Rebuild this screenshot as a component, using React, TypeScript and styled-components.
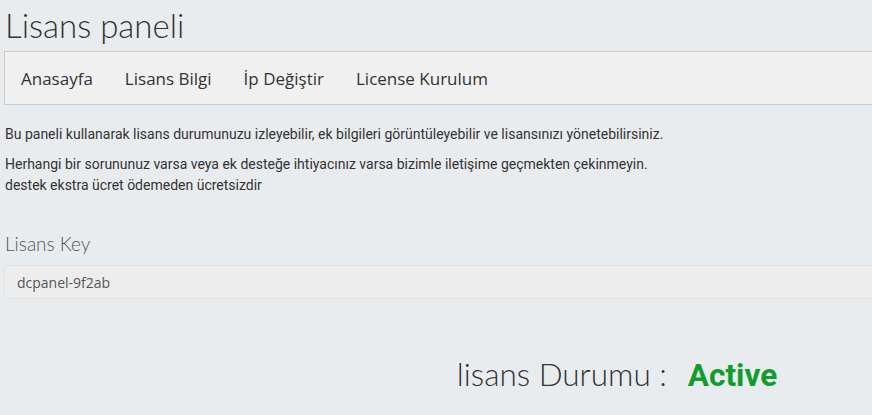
import React from 'react';
import styled, {createGlobalStyle} from 'styled-components';

const GlobalStyle = createGlobalStyle`
    html, body {
        margin: 0;
        padding: 0;
        background: #e9ecef;
        overflow: hidden;
    }
    body {
        font-family: Roboto, "Liberation Sans", sans-serif;
        color: #333;
    }
`

const Page = styled.div`
    width: 1226px;
    padding: 0 0 0 4px;
`

const Title = styled.h1`
    margin: 0;
    padding: 7px 0 0 1px;
    font-family: Lato, "Open Sans", sans-serif;
    font-weight: 300;
    font-size: 33px;
    line-height: 37px;
    color: #333;
`

const NavBar = styled.nav`
    margin-top: 7px;
    height: 52px;
    display: flex;
    align-items: center;
    padding-left: 16px;
    background: #f0f0f0;
    border: 1px solid #cccccc;
`

const NavLink = styled.a`
    font-family: "Open Sans", sans-serif;
    font-size: 17px;
    color: #333;
    text-decoration: none;
    margin-right: 32px;
`

const Text = styled.p<{ top?: number }>`
    margin: ${p => p.top ?? 0}px 0 0 1px;
    font-size: 14px;
    line-height: 21px;
    color: #333;
`

const Label = styled.div`
    margin-top: 36px;
    padding-left: 1px;
    font-family: Lato, "Open Sans", sans-serif;
    font-weight: 300;
    font-size: 19px;
    line-height: 24px;
    color: #555;
`

const KeyField = styled.div`
    margin-top: 9px;
    height: 32px;
    display: flex;
    align-items: center;
    padding-left: 12px;
    background: #ededed;
    border: 1px solid #e2e2e2;
    border-radius: 3px;
    font-family: "Open Sans", sans-serif;
    font-size: 14px;
    color: #555;
`

const Status = styled.div`
    margin-top: 56px;
    display: flex;
    justify-content: center;
    align-items: baseline;
    gap: 21px;
    font-size: 31.5px;
`

const StatusLabel = styled.span`
    font-family: Lato, "Open Sans", sans-serif;
    font-weight: 300;
    color: #333;
`

const StatusValue = styled.span`
    font-family: Roboto, "Liberation Sans", sans-serif;
    font-weight: 700;
    color: #129c2c;
`

export default function App() {
    return (
        <Page>
            <GlobalStyle/>
            <Title>Lisans paneli</Title>
            <NavBar>
                <NavLink href="#">Anasayfa</NavLink>
                <NavLink href="#">Lisans Bilgi</NavLink>
                <NavLink href="#">İp Değiştir</NavLink>
                <NavLink href="#">License Kurulum</NavLink>
            </NavBar>
            <Text top={19}>Bu paneli kullanarak lisans durumunuzu izleyebilir, ek bilgileri görüntüleyebilir ve lisansınızı yönetebilirsiniz.</Text>
            <Text top={9}>Herhangi bir sorununuz varsa veya ek desteğe ihtiyacınız varsa bizimle iletişime geçmekten çekinmeyin.<br/>destek ekstra ücret ödemeden ücretsizdir</Text>
            <Label>Lisans Key</Label>
            <KeyField>dcpanel-9f2ab</KeyField>
            <Status>
                <StatusLabel>lisans Durumu :</StatusLabel>
                <StatusValue>Active</StatusValue>
            </Status>
        </Page>
    );
}
